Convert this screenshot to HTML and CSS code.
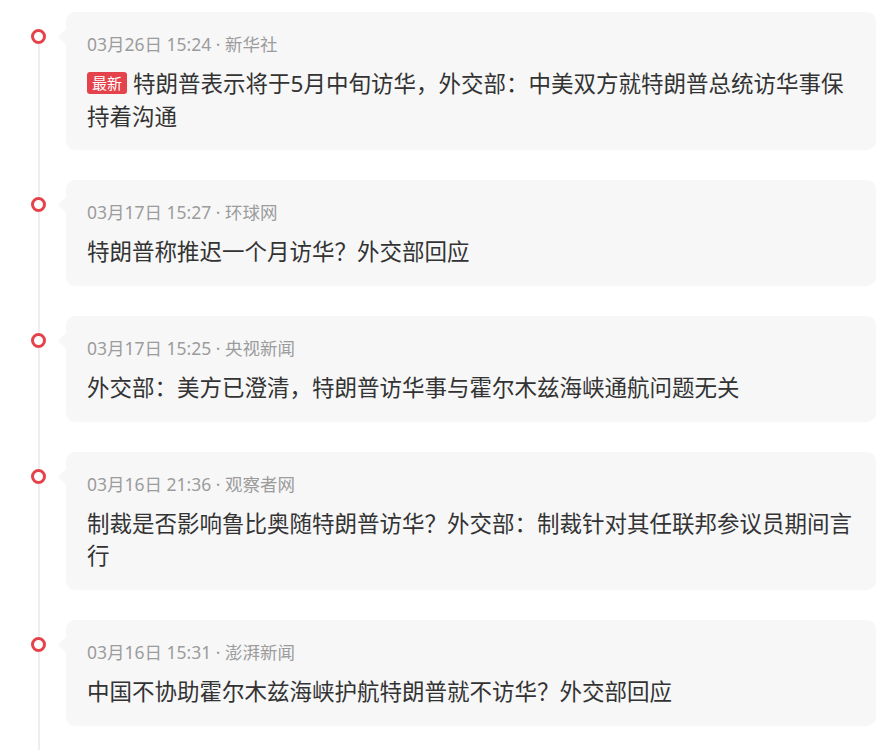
FILE: index.html
```html
<!DOCTYPE html>
<html lang="zh-CN">
<head>
<meta charset="utf-8">
<title>时间线</title>
<link rel="stylesheet" href="styles.css">
</head>
<body>
<ul class="timeline">
  <li class="item">
    <div class="marker"><span class="dot"></span></div>
    <div class="card">
      <div class="meta">03月26日 15:24 · 新华社</div>
      <div class="title"><span class="badge">最新</span><span class="text">特朗普表示将于5月中旬访华，外交部：中美双方就特朗普总统访华事保持着沟通</span></div>
    </div>
  </li>
  <li class="item">
    <div class="marker"><span class="dot"></span></div>
    <div class="card">
      <div class="meta">03月17日 15:27 · 环球网</div>
      <div class="title">特朗普称推迟一个月访华？外交部回应</div>
    </div>
  </li>
  <li class="item">
    <div class="marker"><span class="dot"></span></div>
    <div class="card">
      <div class="meta">03月17日 15:25 · 央视新闻</div>
      <div class="title">外交部：美方已澄清，特朗普访华事与霍尔木兹海峡通航问题无关</div>
    </div>
  </li>
  <li class="item">
    <div class="marker"><span class="dot"></span></div>
    <div class="card">
      <div class="meta">03月16日 21:36 · 观察者网</div>
      <div class="title">制裁是否影响鲁比奥随特朗普访华？外交部：制裁针对其任联邦参议员期间言行</div>
    </div>
  </li>
  <li class="item">
    <div class="marker"><span class="dot"></span></div>
    <div class="card">
      <div class="meta">03月16日 15:31 · 澎湃新闻</div>
      <div class="title">中国不协助霍尔木兹海峡护航特朗普就不访华？外交部回应</div>
    </div>
  </li>
</ul>
</body>
</html>
```
FILE: styles.css
```css
html, body {
  margin: 0;
  padding: 0;
  background: #fff;
}
body {
  font-family: "Noto Sans", "Noto Sans CJK SC", sans-serif;
  color: #333;
}
.timeline {
  list-style: none;
  margin: 0;
  padding: 12px 19px 0 0;
  background: linear-gradient(#eeeeee, #eeeeee) no-repeat 38px 40px / 2px 100%;
  min-height: 738px;
}
.item {
  display: flex;
  margin-bottom: 30.3px;
}
.marker {
  width: 66px;
  flex: none;
}
.dot {
  display: block;
  box-sizing: border-box;
  width: 15px;
  height: 15px;
  margin: 17px 0 0 31px;
  border: 3px solid #e5434b;
  border-radius: 50%;
  background: #fff;
}
.card {
  flex: 1;
  position: relative;
  background: #f7f7f8;
  border-radius: 9px;
  padding: 19px 21px 17px 21px;
}
.card::before {
  content: "";
  position: absolute;
  left: -8px;
  top: 17px;
  border-style: solid;
  border-width: 8px 8px 8px 0;
  border-color: transparent #f7f7f8 transparent transparent;
}
.meta {
  font-size: 17.5px;
  line-height: 26px;
  color: #9c9c9c;
  margin-bottom: 11px;
}
.title {
  font-size: 22.5px;
  line-height: 32.5px;
  color: #333;
}
.badge {
  display: inline-block;
  vertical-align: 3px;
  background: #e5434b;
  color: #fff;
  font-size: 15px;
  line-height: 22px;
  padding: 0 5px;
  border-radius: 3px;
  margin-right: 6px;
}
```
